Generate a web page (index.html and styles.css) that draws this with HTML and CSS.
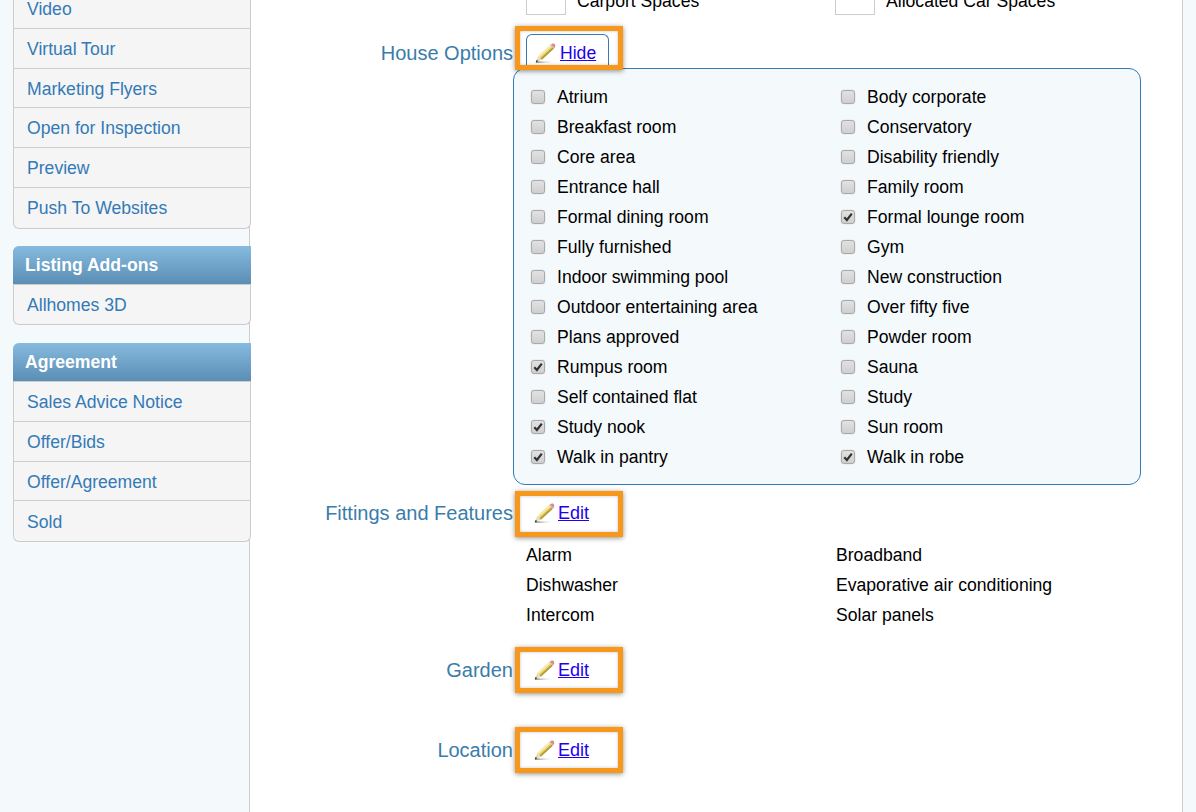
FILE: index.html
```html
<!DOCTYPE html>
<html lang="en">
<head>
<meta charset="utf-8">
<title>Listing</title>
<link rel="stylesheet" href="styles.css">
</head>
<body>
<svg class="defs" width="0" height="0" aria-hidden="true">
  <defs>
    <linearGradient id="pshadow" x1="0" x2="1" y1="0" y2="0">
      <stop offset="0" stop-color="#8a8a8a"/>
      <stop offset="1" stop-color="#d8d8d8" stop-opacity="0"/>
    </linearGradient>
  </defs>
  <symbol id="pencil" viewBox="0 0 22 20">
    <rect x="2" y="18.3" width="17" height="1.7" fill="url(#pshadow)"/>
    <path d="M4.2 13.2 16.2 2.2l3.6 3.6L7.8 16.8z" fill="#e8cf68"/>
    <path d="M4.2 13.2 16.2 2.2l1.3 1.3L5.5 14.5z" fill="#f8eca4"/>
    <path d="M7.8 16.8 19.8 5.8l-1.3-1.3L6.5 15.5z" fill="#b59a45"/>
    <path d="M4.2 13.2 7.8 16.8 1.6 19.4z" fill="#eadbb8"/>
    <path d="M2.8 16.8 4.2 18.2 1.6 19.4z" fill="#2f2f2f"/>
    <path d="M16.2 2.2 17 1.4l3.6 3.6-.8.8z" fill="#b9b9b9"/>
    <path d="M17 1.4C18 .4 19.4 0 20.5.9c1 .9.9 2.7.1 4.1z" fill="#e8808c"/>
  </symbol>
</svg>
<div class="layout">
  <aside class="sidebar">
    <ul class="card first">
      <li><a href="#">Video</a></li>
      <li><a href="#">Virtual Tour</a></li>
      <li><a href="#">Marketing Flyers</a></li>
      <li><a href="#">Open for Inspection</a></li>
      <li><a href="#">Preview</a></li>
      <li><a href="#">Push To Websites</a></li>
    </ul>
    <section class="card titled">
      <h3>Listing Add-ons</h3>
      <ul>
        <li class="short"><a href="#">Allhomes 3D</a></li>
      </ul>
    </section>
    <section class="card titled">
      <h3>Agreement</h3>
      <ul>
        <li><a href="#">Sales Advice Notice</a></li>
        <li><a href="#">Offer/Bids</a></li>
        <li><a href="#">Offer/Agreement</a></li>
        <li><a href="#">Sold</a></li>
      </ul>
    </section>
  </aside>
  <main class="main">
    <div class="cars">
      <label class="car"><span class="numbox"></span>Carport Spaces</label>
      <label class="car"><span class="numbox"></span>Allocated Car Spaces</label>
    </div>

    <div class="opt-row house">
      <span class="opt-label">House Options</span>
      <span class="tab"><svg class="pencil"><use href="#pencil"/></svg><a href="#">Hide</a></span>
      <span class="callout"></span>
    </div>
    <div class="panel">
      <label class="opt"><input type="checkbox">Atrium</label>
      <label class="opt"><input type="checkbox">Body corporate</label>
      <label class="opt"><input type="checkbox">Breakfast room</label>
      <label class="opt"><input type="checkbox">Conservatory</label>
      <label class="opt"><input type="checkbox">Core area</label>
      <label class="opt"><input type="checkbox">Disability friendly</label>
      <label class="opt"><input type="checkbox">Entrance hall</label>
      <label class="opt"><input type="checkbox">Family room</label>
      <label class="opt"><input type="checkbox">Formal dining room</label>
      <label class="opt"><input type="checkbox" checked>Formal lounge room</label>
      <label class="opt"><input type="checkbox">Fully furnished</label>
      <label class="opt"><input type="checkbox">Gym</label>
      <label class="opt"><input type="checkbox">Indoor swimming pool</label>
      <label class="opt"><input type="checkbox">New construction</label>
      <label class="opt"><input type="checkbox">Outdoor entertaining area</label>
      <label class="opt"><input type="checkbox">Over fifty five</label>
      <label class="opt"><input type="checkbox">Plans approved</label>
      <label class="opt"><input type="checkbox">Powder room</label>
      <label class="opt"><input type="checkbox" checked>Rumpus room</label>
      <label class="opt"><input type="checkbox">Sauna</label>
      <label class="opt"><input type="checkbox">Self contained flat</label>
      <label class="opt"><input type="checkbox">Study</label>
      <label class="opt"><input type="checkbox" checked>Study nook</label>
      <label class="opt"><input type="checkbox">Sun room</label>
      <label class="opt"><input type="checkbox" checked>Walk in pantry</label>
      <label class="opt"><input type="checkbox" checked>Walk in robe</label>
    </div>

    <div class="opt-row fittings">
      <span class="opt-label">Fittings and Features</span>
      <span class="edit"><svg class="pencil"><use href="#pencil"/></svg><a href="#">Edit</a></span>
      <span class="callout"></span>
    </div>
    <div class="summary">
      <span>Alarm</span><span>Broadband</span>
      <span>Dishwasher</span><span>Evaporative air conditioning</span>
      <span>Intercom</span><span>Solar panels</span>
    </div>

    <div class="opt-row garden">
      <span class="opt-label">Garden</span>
      <span class="edit"><svg class="pencil"><use href="#pencil"/></svg><a href="#">Edit</a></span>
      <span class="callout"></span>
    </div>
    <div class="opt-row location">
      <span class="opt-label">Location</span>
      <span class="edit"><svg class="pencil"><use href="#pencil"/></svg><a href="#">Edit</a></span>
      <span class="callout"></span>
    </div>
  </main>
</div>
</body>
</html>
```

FILE: styles.css
```css
* { box-sizing: border-box; }
html, body { margin: 0; height: 812px; overflow: hidden; }
body {
  background: #f4f9fc;
  color: #000;
  font-family: "Liberation Sans", Arial, sans-serif;
  font-size: 17.6px;
  line-height: 24px;
}
.defs { position: absolute; }
a { color: #2200ee; }

.layout {
  display: flex;
  align-items: stretch;
  margin-top: -20px;
  padding-left: 13px;
  height: 840px;
}

/* Sidebar */
.sidebar {
  flex: 0 0 238px;
  padding-top: 9px;
  position: relative;
  z-index: 1;
  display: flex;
  flex-direction: column;
  gap: 18px;
}
.card, .card ul { list-style: none; margin: 0; padding: 0; }
.card {
  background: #f5f5f5;
  border: 1px solid #ccc;
  border-top: 0;
  border-radius: 0 0 6px 6px;
}
.card li {
  height: 39.75px;
  padding: 1.5px 0 0 13px;
  display: flex;
  align-items: center;
  border-bottom: 1px solid #ccc;
}
.card li:last-child { border-bottom: 0; }
.card li.short { height: 39px; }
.card.first { margin-bottom: -0.5px; }
.card a { color: #337ab7; text-decoration: none; }
.titled { border-radius: 6px; }
.titled h3 {
  margin: 0 -1px;
  height: 39px;
  padding-left: 12px;
  display: flex;
  align-items: center;
  font-size: 17.6px;
  font-weight: 700;
  color: #fff;
  background: linear-gradient(#87badf, #5b8eb4);
  border-bottom: 1px solid #ccc;
  border-radius: 6px 0 0 0;
}

/* Main */
.main {
  flex: 0 0 934px;
  margin-left: -2px;
  padding-top: 1px;
  background: #fff;
  border-left: 1px solid #ccc;
  border-right: 1px solid #ccc;
}
.cars {
  display: grid;
  grid-template-columns: 309px 309px;
  padding-left: 276px;
  height: 45px;
}
.car {
  display: flex;
  align-items: center;
  gap: 11px;
  height: 34px;
  padding-top: 6px;
}
.numbox {
  flex: none;
  width: 40px;
  height: 34px;
  margin-top: -6px;
  background: #fff;
  border: 1px solid #ccc;
}

.opt-row {
  position: relative;
  display: flex;
  align-items: center;
  height: 46px;
}
.opt-label {
  flex: 0 0 263px;
  text-align: right;
  color: #3a7cab;
  font-size: 20px;
}
.callout {
  position: absolute;
  left: 264.5px;
  top: 0;
  width: 108px;
  height: 46px;
  border: 5px solid #f7981d;
  box-shadow: 0 1px 5px rgba(0, 0, 0, .45), inset 0 0 3px rgba(0, 0, 0, .25);
  z-index: 2;
  pointer-events: none;
}
.pencil { width: 22px; height: 20px; flex: none; }
.house { height: 42px; align-items: flex-end; }
.house .opt-label { padding-bottom: 3px; }
.house .callout { height: 44px; }
.tab {
  display: flex;
  align-items: center;
  gap: 4px;
  margin-left: 13px;
  width: 83px;
  height: 35px;
  padding: 1px 0 0 7px;
  margin-bottom: -1px;
  background: #fff;
  border: 1px solid #337ab7;
  border-bottom: 0;
  border-radius: 6px 6px 0 0;
}
.edit {
  display: flex;
  align-items: center;
  gap: 3px;
  margin-left: 20px;
  font-size: 18px;
}

.panel {
  display: grid;
  grid-template-columns: 310px 310px;
  grid-auto-rows: 30px;
  width: 628px;
  height: 417px;
  margin-left: 263px;
  padding: 13px 0 0 17px;
  background: #f4f9fc;
  border: 1px solid #337ab7;
  border-radius: 12px;
}
.opt { display: flex; align-items: center; }
.opt input {
  appearance: none;
  -webkit-appearance: none;
  flex: none;
  width: 14px;
  height: 14px;
  margin: -1px 12px 0 0;
  border: 1px solid #a9a9a9;
  border-radius: 3px;
  background: linear-gradient(#e2e2e2, #cfcfcf);
  box-shadow: 0 0 1px rgba(0, 0, 0, .35);
}
.opt input:checked {
  background:
    url("data:image/svg+xml,%3Csvg xmlns='http://www.w3.org/2000/svg' viewBox='0 0 12 12'%3E%3Cpath d='M2.3 6.3 4.9 9 9.8 2.6' fill='none' stroke='%23333' stroke-width='2.2'/%3E%3C/svg%3E") center / 12px 12px no-repeat,
    linear-gradient(#e2e2e2, #cfcfcf);
}

.fittings { margin-top: 6px; padding-bottom: 2px; }
.summary {
  display: grid;
  grid-template-columns: 310px 310px;
  grid-auto-rows: 30px;
  padding-left: 276px;
  margin-top: 6px;
}
.garden { margin-top: 14px; }
.location { margin-top: 34px; }
```
